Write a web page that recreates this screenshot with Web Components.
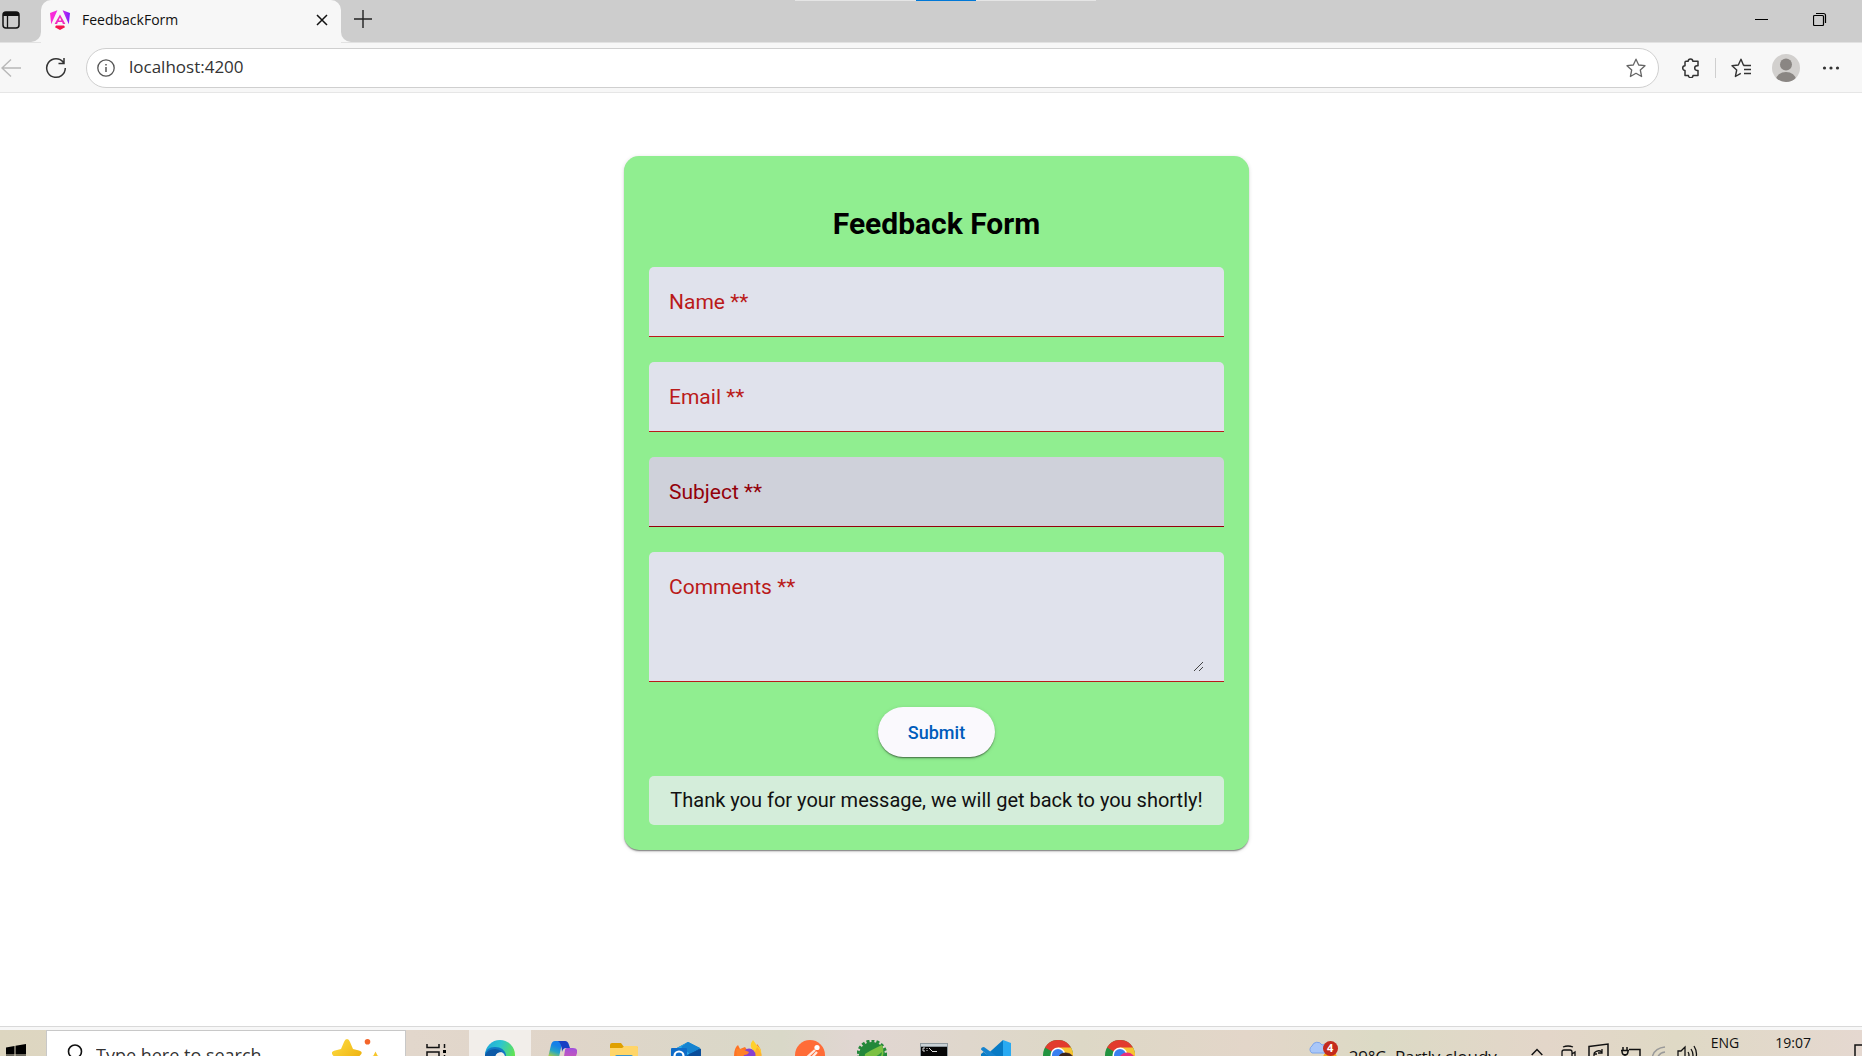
<!DOCTYPE html>
<html lang="en">
<head>
<meta charset="utf-8">
<title>FeedbackForm</title>
<style>
html,body{height:100%;margin:0}
body{background:#fff;overflow:hidden;font-family:"Open Sans","Noto Sans",sans-serif;color:#111}
</style>
</head>
<body>
<desktop-screen>
  <browser-tabs slot="top"></browser-tabs>
  <browser-toolbar slot="top"></browser-toolbar>
  <feedback-form></feedback-form>
  <task-bar slot="bottom"></task-bar>
</desktop-screen>
<script>
const define = (name, html, setup) => customElements.define(name, class extends HTMLElement {
  connectedCallback() {
    if (this.shadowRoot) return;
    const t = document.createElement('template');
    t.innerHTML = '<style>:host,*{box-sizing:border-box}:host([hidden]){display:none}</style>' + html;
    this.attachShadow({mode: 'open'}).append(t.content.cloneNode(true));
    if (setup) setup(this, this.shadowRoot);
  }
});

/* name: [width, height, markup] */
const ICONS = {
  panes: [18,18,'<rect x="1" y="1" width="16" height="16" rx="3" fill="none" stroke="#111" stroke-width="1.5"/><path d="M1 5V4a3 3 0 0 1 3-3h10a3 3 0 0 1 3 3v1z" fill="#111"/><path d="M5.5 5v12" stroke="#111" stroke-width="1.3"/>'],
  angular: [20,20,'<defs><linearGradient id="a" x1="0" y1="0" x2="1" y2="0"><stop offset="0" stop-color="#ff2ad4"/><stop offset=".55" stop-color="#e52be8"/><stop offset="1" stop-color="#7a1cff"/></linearGradient></defs><path d="M7.400 .3 0 3.100 1.200 14.200zM12.600 .3 20 3.100 18.800 14.200z" fill="url(#a)"/><path d="M10 4.500 4.600 14h2.500l.8-2h4.200l.8 2h2.500zM10 7.500 11.300 10.400H8.700z" fill="#f02ac0" fill-rule="evenodd"/><path d="M6 15.500h8l1 1.700L10 20l-5-2.800z" fill="#f5144f"/>'],
  close: [12,12,'<path d="M1 1l10 10M11 1 1 11" stroke="#111" stroke-width="1.5"/>'],
  plus: [18,18,'<path d="M9 0v18M0 9h18" stroke="#222" stroke-width="1.4"/>'],
  min: [14,14,'<path d="M0 7.500h13" stroke="#000"/>'],
  restore: [14,14,'<rect x=".5" y="3.500" width="10" height="10" rx="1" fill="none" stroke="#000" stroke-width="1.200"/><path d="M3 1.500h7.500q2 0 2 2V11" fill="none" stroke="#000" stroke-width="1.200"/>'],
  back: [20,18,'<path d="M20 9H1M10 .5 1 9l9 8.500" fill="none" stroke="#b8b8b8" stroke-width="1.400"/>'],
  reload: [22,22,'<path d="M18.500 5.500A9.300 9.300 0 1 0 20.300 11M19 1v5.500h-5.500" fill="none" stroke="#333" stroke-width="1.500"/>'],
  info: [18,18,'<circle cx="9" cy="9" r="8.200" fill="none" stroke="#555" stroke-width="1.300"/><path d="M9 8v5M9 5v1.500" stroke="#555" stroke-width="1.500"/>'],
  star: [20,20,'<path d="M10 1.200 12.700 7l6.300.7-4.700 4.300 1.300 6.500L10 15.300l-5.600 3.200L5.700 12 1 7.700 7.300 7z" fill="none" stroke="#666" stroke-width="1.300" stroke-linejoin="round"/>'],
  puzzle: [19,20,'<path d="M5 3.200h2.200a2.300 2.300 0 0 1 4.600 0H17v4.600h-1a2.300 2.300 0 0 0 0 4.600h1v5h-5a2.300 2.300 0 0 1-4.600 0H4v-5a2.300 2.300 0 0 1 0-4.600V4.200q0-1 1-1z" fill="none" stroke="#333" stroke-width="1.500" stroke-linejoin="round"/>'],
  favs: [21,20,'<path d="M13.500 7.500 12.400 7 10 1.200 7.300 7 1 7.700 5.700 12l-1.300 6.500 5.400-3.100M12.500 7.500H20M13 11.500h7M13 15.500h7" fill="none" stroke="#333" stroke-width="1.400" stroke-linejoin="round"/>'],
  person: [28,28,'<defs><clipPath id="p"><circle cx="14" cy="14" r="14"/></clipPath></defs><g clip-path="url(#p)"><rect width="28" height="28" fill="#d2d0ce"/><circle cx="14" cy="10.500" r="6" fill="#8a8683"/><ellipse cx="14" cy="26" rx="10" ry="8" fill="#8a8683"/></g>'],
  dots: [18,18,'<g fill="#333"><circle cx="2.500" cy="9" r="1.600"/><circle cx="9" cy="9" r="1.600"/><circle cx="15.500" cy="9" r="1.600"/></g>'],
  windows: [20,22,'<path d="M0 3.500 8.500 2v8.500H0zM9.500 1.800 20 0v10.500H9.500zM0 11.500h8.500V20L0 18.500zM9.500 11.500H20V22L9.500 20.200z"/>'],
  search: [16,22,'<circle cx="8" cy="7.500" r="6.500" fill="none" stroke="#111" stroke-width="1.600"/><path d="M4 13-1 20" stroke="#111" stroke-width="1.600"/>'],
  sparkle: [48,32,'<defs><linearGradient id="s" x1="0" y1="0" x2="1" y2="1"><stop offset="0" stop-color="#ffdf45"/><stop offset="1" stop-color="#e9a500"/></linearGradient></defs><path d="M15 0q2 0 3 3l3 7 6 1.500q5 1.500 1 5l-5 5 1 10-9-5-9 5 1-10-6-5q-3-4 2-5l6-1.500 3-7q1-3 3-3z" fill="url(#s)"/><circle cx="35.500" cy="2.800" r="2.800" fill="#f4652a"/><path d="M43.500 12.500l2 4 4 2-4 2-2 4-2-4-4-2 4-2z" fill="#f7c62b"/>'],
  taskview: [21,22,'<path d="M1 0v3.500h12V0M1 18V8h12v10zM18.500 0v4M18.500 11v10" fill="none" stroke="#111" stroke-width="1.500"/><rect x="17" y="6" width="3" height="3"/>'],
  edge: [30,30,'<defs><linearGradient id="e" x1="0" y1="0" x2="1" y2=".4"><stop offset="0" stop-color="#20a5dc"/><stop offset=".5" stop-color="#2cc5cf"/><stop offset="1" stop-color="#62e352"/></linearGradient></defs><circle cx="15" cy="15" r="15" fill="url(#e)"/><path d="M0 15Q1 7 10 7q9 0 11 8l-3 12H9Q0 23 0 15z" fill="#1177c5"/><circle cx="15" cy="17" r="5" fill="#f1eeeb"/><path d="M0 15Q3 9 10 9q4 0 7 3-6 0-7 5v10Q0 23 0 15z" fill="#0d5aa7"/>'],
  copilot: [30,30,'<defs><linearGradient id="c" x1=".3" y1="0" x2="0" y2="1"><stop offset=".1" stop-color="#1580e8"/><stop offset=".35" stop-color="#25a5c5"/><stop offset=".65" stop-color="#c8d52a"/></linearGradient><linearGradient id="d" x1="0" y1="0" x2="0" y2="1"><stop offset="0" stop-color="#a150dc"/><stop offset="1" stop-color="#f3628f"/></linearGradient></defs><path d="M8 1h11q-4 1-5 7l-4 18H2q-3 0-2-4L4 5q1-4 4-4z" fill="url(#c)"/><path d="M11 1h7q3 0 4 4l1 3h-4q-3 0-4 4 0-8-4-11z" fill="#173fc4"/><path d="M20 8h6q5 0 4 5l-4 13q-1 3-5 3H11q4-1 5-6l2-13q0-2 2-2z" fill="url(#d)"/>'],
  folder: [28,30,'<path d="M0 5q0-2 2-2h9l3 4H28v19H0z" fill="#dfa000"/><path d="M0 8h12l3-2h12q1 0 1 2v18H0z" fill="#ffd568"/><path d="M5 17q0-2 2-2h14q2 0 2 2v9H5z" fill="#3c94cd"/><path d="M8 17h12v9H8z" fill="#cfe8f2"/>'],
  outlook: [30,30,'<path d="M17 2 30 9v19H4V9z" fill="#0a5ea8"/><path d="M17 2 4 9l12 6 13-7z" fill="#28a8ea"/><path d="M17 2l12 6-10 6-9-7z" fill="#1683d0"/><path d="M18 14 30 9v19H18z" fill="#0a4d9a"/><rect y="8" width="16" height="18" rx="1" fill="#0f6cc8"/><circle cx="8" cy="16" r="4.500" fill="none" stroke="#fff" stroke-width="2.200"/>'],
  firefox: [30,30,'<path d="M1 16Q1 8 5 5l2 4 5-2 3 4-2 9 8 3 3-19q5 5 4 13-2 12-14 12Q2 28 1 16z" fill="#ff7324"/><path d="M20 0q-4 5-1 9 3 3 4 8l5 0q1-5-1-9-4-3-7-8z" fill="#ffd02d"/><path d="M24 7q6 6 4 13-3 8-12 9 8-8 5-15z" fill="#ffb12c"/><circle cx="16" cy="15" r="6.500" fill="#8741cf"/><path d="M3 9l6 0 7 3q-1 3-5 3-2 5 3 8-8 0-10-6z" fill="#ff8028"/>'],
  postman: [30,30,'<circle cx="15" cy="15" r="15" fill="#ff6c37"/><circle cx="22" cy="7.500" r="2.600" fill="#fff"/><path d="M20 10 9 20M22 12 12 23" stroke="#ffe9df" stroke-width="2.300"/>'],
  leaf: [30,30,'<circle cx="15" cy="15" r="13" fill="#23883a"/><circle cx="15" cy="15" r="14" fill="none" stroke="#23883a" stroke-width="3" stroke-dasharray="3 2"/><path d="M8 14q6-4 17-9 4 11-3 17-8 5-15 0z" fill="#7cc142"/><path d="M8 20q9-1 17-8-1 10-14 12z" fill="#2c9140"/>'],
  terminal: [28,30,'<rect y="3" width="28" height="25" fill="#8e989d"/><rect x="1" y="4" width="26" height="2" fill="#c9d1d5"/><rect x="1" y="7" width="26" height="20" fill="#060606"/><path d="M5 8H3v3h2M7 8v1m0 1v1M9 8l3 3M12 11.500h5" stroke="#ddd" fill="none"/>'],
  code: [30,30,'<path d="M22 0 6 14.500 2.500 12 0 14v3l16 13 6-1z" fill="#087bc5"/><path d="M0 9.500Q0 7 3 7l22 16-3 6z" fill="#1683ce"/><path d="M22 0l8 3v24l-8 3z" fill="#29aaf2"/>'],
  chrome: [30,30,'<circle cx="15" cy="15" r="15" fill="#22933f"/><path d="M2 7.500A15 15 0 0 1 28 7.500L15 15z" fill="#e23b2e"/><path d="M28 7.500A15 15 0 0 1 15 30L15 7.500z" fill="#f7c431"/><circle cx="15" cy="15" r="7.500" fill="#fff"/><circle cx="15" cy="15" r="6" fill="#397ff0"/><circle cx="23" cy="21" r="8.500" fill="#7a5138"/><path d="M15 18q2-6 9-5 5 1 6 5-6-3-15 0z" fill="#3b251a"/>'],
  chrome2: [30,30,'<circle cx="15" cy="15" r="15" fill="#22933f"/><path d="M2 7.500A15 15 0 0 1 28 7.500L15 15z" fill="#e23b2e"/><path d="M28 7.500A15 15 0 0 1 15 30L15 7.500z" fill="#f7c431"/><circle cx="15" cy="15" r="7.500" fill="#fff"/><circle cx="15" cy="15" r="6" fill="#397ff0"/><circle cx="22" cy="21" r="8.500" fill="#e6307b"/>'],
  weather: [32,30,'<circle cx="22" cy="17" r="7" fill="#f6a91c"/><path d="M4 12a4 4 0 0 1 0-7 5.500 5.500 0 0 1 10-1 4 4 0 0 1 4 8z" fill="#a9c7f8" stroke="#7ba4ec"/><circle cx="22.500" cy="7.500" r="7.500" fill="#c42b1c"/>'],
  chevron: [12,22,'<path d="M.7 12 6 6.500 11.300 12" fill="none" stroke="#111" stroke-width="1.500"/>'],
  camera: [16,22,'<path d="M2 4q5-2 10 0M1 9q0-2 2-2h6q2 0 2 2v9H1zM11 11l3-2v8" fill="none" stroke="#111" stroke-width="1.300"/>'],
  sync: [22,22,'<path d="M1 3.500 20 1v17H1z" fill="none" stroke="#111" stroke-width="1.500"/><path d="M6 10q4-4 8-1M14 6v4h-4M6 15V11h3" fill="none" stroke="#111" stroke-width="1.300"/>'],
  battery: [20,22,'<path d="M8 6.500h11V16H5v-3M2 4v3M6 4v3M0 7.500h8M1 8q0 4 3 4t3-4M4 11v5" fill="none" stroke="#111" stroke-width="1.500"/>'],
  wifi: [14,22,'<path d="M0 15Q2 5 13 4M5 17q1-7 8-8" fill="none" stroke="#999" stroke-width="1.500"/>'],
  sound: [22,22,'<path d="M1 8h3l4-4v16l-4-4H1zM11 9q2 3 0 6M14 6q4 6 0 12M17 3q5 8 0 16" fill="none" stroke="#111" stroke-width="1.300"/>'],
  note: [20,22,'<path d="M1 1h18v14H1z" fill="none" stroke="#111" stroke-width="1.500"/>']
};
define('ui-icon', '<style>:host{display:block;flex:none}svg{display:block}</style>', (el, root) => {
  const [w, h, body] = ICONS[el.getAttribute('name')];
  root.innerHTML += `<svg width="${w}" height="${h}" viewBox="0 0 ${w} ${h}" aria-hidden="true">${body}</svg>`;
});

define('desktop-screen', `
<style>
:host{display:flex;flex-direction:column;height:100vh}
main{flex:1;min-height:0;padding:63px 0 0 11px;border-bottom:1px solid #d9d9d9;overflow:hidden}
.edge{height:3px;background:#f7f7f7;flex:none}
</style>
<slot name="top"></slot><main><slot></slot></main><div class="edge"></div><slot name="bottom"></slot>`);

define('browser-tabs', `
<style>
:host{display:flex;height:43px;flex:none;background:#f7f7f7;position:relative;border-bottom:1px solid #e2e2e2}
button{border:0;background:none;padding:0;display:flex;align-items:center;justify-content:center}
.left,.right{background:#cdcdcd;display:flex;align-items:center}
.left{width:41px;border-bottom-right-radius:10px;padding:0 0 2px 2px}
.tabwrap{width:300px;background:linear-gradient(#cdcdcd 50%,#f7f7f7 50%);margin-bottom:-1px}
.tab{height:100%;background:#f7f7f7;border-radius:10px 10px 0 0;display:flex;align-items:center;padding:0 13px 4px 9px;gap:12px;font-size:14px}
.tab span{flex:1}
.right{flex:1;border-bottom-left-radius:10px;padding:0 35px 4px 13px;gap:44px}
.right button:first-child{margin-right:auto}
.hint{position:absolute;top:0;left:795px;width:301px;height:1px;background:#e5e5e5;display:flex;justify-content:center}
.hint i{width:60px;background:#0078d7}
</style>
<div class="left"><button aria-label="Tab actions"><ui-icon name="panes"></ui-icon></button></div>
<div class="tabwrap"><div class="tab"><ui-icon name="angular"></ui-icon><span>FeedbackForm</span><button aria-label="Close tab"><ui-icon name="close"></ui-icon></button></div></div>
<div class="right"><button aria-label="New tab"><ui-icon name="plus"></ui-icon></button><button aria-label="Minimise"><ui-icon name="min"></ui-icon></button><button aria-label="Restore"><ui-icon name="restore"></ui-icon></button></div>
<div class="hint"><i></i></div>`);

define('browser-toolbar', `
<style>
:host{display:flex;align-items:center;height:50px;flex:none;background:#f7f7f7;border-bottom:1px solid #e6e6e6;padding:0 22px 0 1px}
button{border:0;background:none;padding:0}
.reload{margin:0 19px 0 24px}
.address{flex:1;height:40px;border:1px solid #cfcfcf;border-radius:20px;background:#fff;display:flex;align-items:center;padding:0 12px 0 10px;gap:14px}
input{flex:1;min-width:0;height:24px;border:0;outline:0;padding:0 0 2px;background:none;font:17px "Open Sans",sans-serif;color:#333}
.tools{display:flex;align-items:center;margin-left:22px}
.sep{width:1px;height:20px;background:#cfcfcf;margin:0 15px}
.tools .p{margin:0 22px 0 20px}
</style>
<button aria-label="Back"><ui-icon name="back"></ui-icon></button>
<button class="reload" aria-label="Reload"><ui-icon name="reload"></ui-icon></button>
<div class="address"><ui-icon name="info"></ui-icon><input aria-label="Address" value="localhost:4200"><button aria-label="Add to favourites"><ui-icon name="star"></ui-icon></button></div>
<div class="tools"><button aria-label="Extensions"><ui-icon name="puzzle"></ui-icon></button><div class="sep"></div><button aria-label="Favourites"><ui-icon name="favs"></ui-icon></button><button class="p" aria-label="Profile"><ui-icon name="person"></ui-icon></button><button aria-label="Menu"><ui-icon name="dots"></ui-icon></button></div>`);

define('form-field', `
<style>
:host{display:grid;height:70px;background:#e0e2ec;border-bottom:1px solid #ba1a1a;border-radius:5px 5px 0 0;color:#ba1a1a;font-size:21px;line-height:24px}
:host([multiline]){height:130px}
:host([active]){background:#cfd1da;color:#93000a;border-color:#93000a}
label,input,textarea{grid-area:1/1}
label{padding:23px 20px;pointer-events:none;z-index:1}
input,textarea{border:0;outline:0;background:none;padding:0;font:inherit;color:#1a1b1f;margin:30px 20px 9px;min-width:0}
textarea{resize:vertical}
textarea::-webkit-resizer{background:linear-gradient(135deg,transparent 45%,#444 45% 54%,transparent 54% 73%,#444 73% 82%,transparent 82%) 5px 5px/9px 9px no-repeat}
</style>`, (el, root) => {
  const tag = el.hasAttribute('multiline') ? 'textarea' : 'input';
  const label = document.createElement('label'), control = document.createElement(tag);
  label.textContent = el.getAttribute('label') + ' **';
  label.htmlFor = control.id = 'control';
  root.append(label, control);
});

define('feedback-form', `
<style>
:host{display:block;max-width:625px;margin:0 auto;font-family:Roboto,sans-serif}
form{background:#90ee90;border-radius:15px;padding:50px 25px 25px;display:flex;flex-direction:column;gap:25px;box-shadow:0 1px 1px #0003,0 2px 2px -1px #0005,0 1px 4px #0002}
h2{margin:0;font-size:30px;line-height:36px;text-align:center;color:#000}
.actions{display:flex;flex-direction:column;align-items:center;gap:19px}
button{height:50px;padding:0 30px;border:0;border-radius:25px;background:#faf9fd;color:#005cbb;font:500 18px Roboto,sans-serif;box-shadow:0 1px 1px #0003,0 2px 2px -1px #0005,0 1px 4px #0002}
output{align-self:stretch;background:#d4edda;border-radius:5px;padding:12px;text-align:center;font-size:20px;line-height:25px}
</style>
<form onsubmit="return false">
<h2>Feedback Form</h2>
<form-field label="Name"></form-field>
<form-field label="Email"></form-field>
<form-field label="Subject" active></form-field>
<form-field label="Comments" multiline></form-field>
<div class="actions"><button type="submit">Submit</button><output>Thank you for your message, we will get back to you shortly!</output></div>
</form>`);

define('task-bar', `
<style>
:host{display:flex;height:26px;flex:none;overflow:hidden;background:linear-gradient(90deg,#ddd6c0,#e2d7cc 22%,#e0d5c9 30%,#d9d8c8 42%,#e1d6d2 46%,#ddd8c6 58%,#e3d6c9 67%,#dcdac5 74%,#e3d6c9 83%,#dfd9c5 90%,#e5d8d0)}
button{border:0;background:none;padding:0;height:50px;display:flex;align-items:center;justify-content:center}
.start{width:46px;padding-right:14px}
.search{width:360px;height:50px;background:#fff;border:1px solid #c8c8c8;display:flex;align-items:center;padding:0 25px 0 20px;gap:13px}
.search input{flex:1;min-width:0;border:0;outline:0;padding:0;background:none;font:18px "Open Sans",sans-serif}
.search input::placeholder{color:#333;opacity:1}
.view{width:63px;padding-right:2px}
.apps{display:flex}
.apps button{width:62px}
.apps .on{background:#f2eeea}
.tray{display:flex;height:50px;margin-left:auto;align-items:center;font-size:17px;padding-top:2px}
.weather{display:flex;align-items:center;gap:9px;margin-right:34px}
.weather .w{display:grid}
.w>*{grid-area:1/1}
.w b{justify-self:end;width:19px;color:#fff;font-size:11px;line-height:14px;text-align:center;z-index:1}
.sys{display:flex;gap:11px;align-self:start;padding-top:11px;margin-right:12px}
.sys ui-icon:first-child{margin-right:7px}
.txt{font-size:14px;line-height:22px;align-self:start}
.eng{margin-right:36px}
.time{margin-right:43px}
.end{width:8px;overflow:hidden;align-self:start;padding-top:12px}
</style>
<button class="start" aria-label="Start"><ui-icon name="windows"></ui-icon></button>
<div class="search"><ui-icon name="search"></ui-icon><input aria-label="Search" placeholder="Type here to search"><ui-icon name="sparkle"></ui-icon></div>
<button class="view" aria-label="Task view"><ui-icon name="taskview"></ui-icon></button>
<div class="apps"></div>
<div class="tray">
<div class="weather"><div class="w"><ui-icon name="weather"></ui-icon><b>4</b></div><span>29°C&nbsp; Partly cloudy</span></div>
<div class="sys"><ui-icon name="chevron"></ui-icon><ui-icon name="camera"></ui-icon><ui-icon name="sync"></ui-icon><ui-icon name="battery"></ui-icon><ui-icon name="wifi"></ui-icon><ui-icon name="sound"></ui-icon></div>
<span class="txt eng">ENG</span><span class="txt time">19:07</span><div class="end"><ui-icon name="note"></ui-icon></div>
</div>`, (el, root) => {
  const apps = ['edge','copilot','folder','outlook','firefox','postman','leaf','terminal','code','chrome','chrome2'];
  root.querySelector('.apps').innerHTML = apps.map(a => `<button class="${a === 'edge' ? 'on' : ''}" aria-label="${a}"><ui-icon name="${a}"></ui-icon></button>`).join('');
});
</script>
</body>
</html>
